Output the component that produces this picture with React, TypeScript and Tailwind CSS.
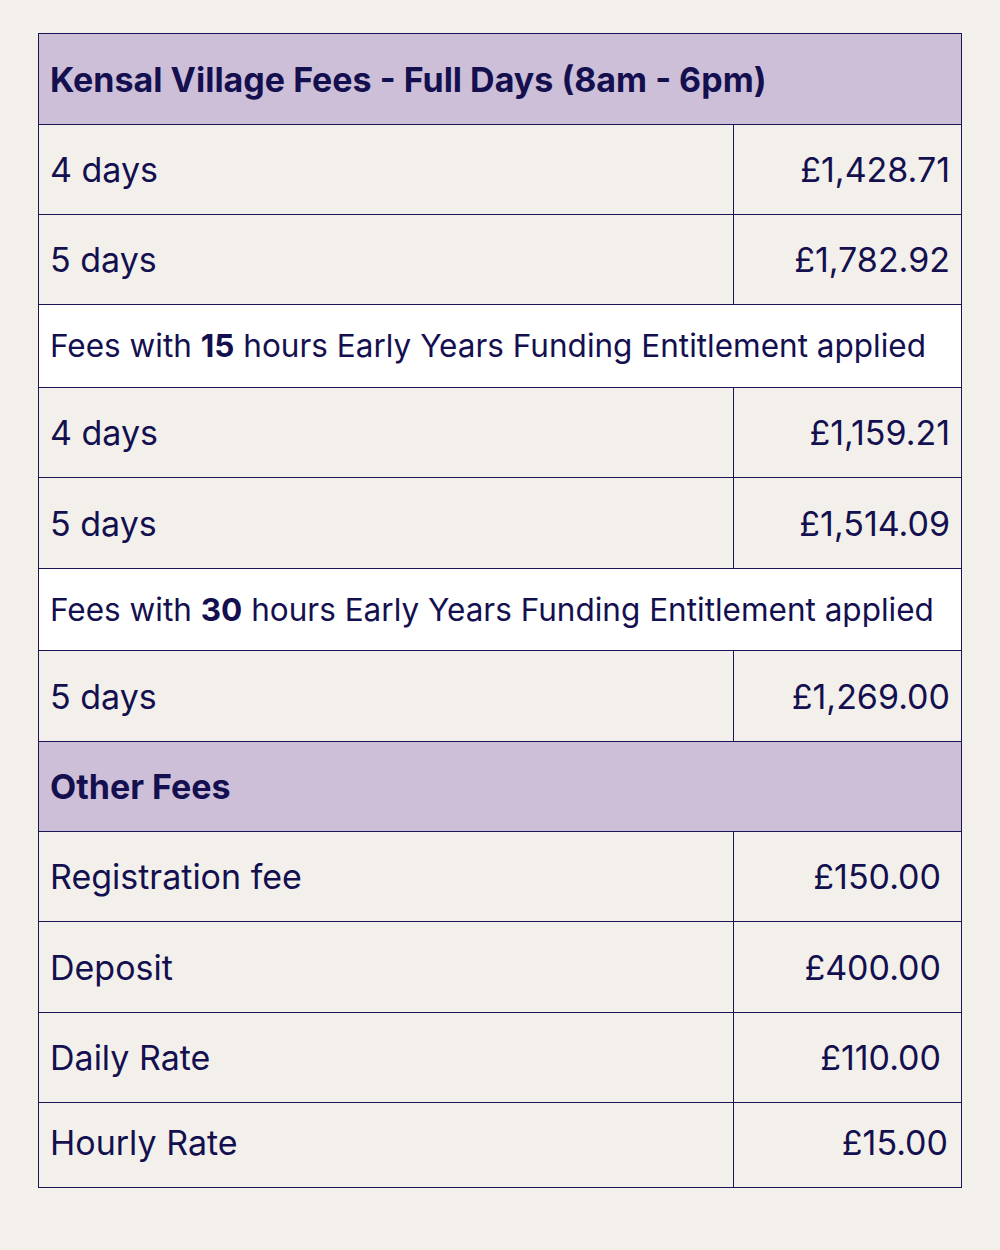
import React from 'react';

type Row =
    | { kind: 'head'; label: string; h: string }
    | { kind: 'note'; hours: string; h: string }
    | { kind: 'fee'; label: string; amount: string; h: string; pr: string };

const rows: Row[] = [
    { kind: 'head', label: 'Kensal Village Fees - Full Days (8am - 6pm)', h: 'h-[91px]' },
    { kind: 'fee', label: '4 days', amount: '£1,428.71', h: 'h-[90px]', pr: 'pr-[11px]' },
    { kind: 'fee', label: '5 days', amount: '£1,782.92', h: 'h-[90px]', pr: 'pr-[11px]' },
    { kind: 'note', hours: '15', h: 'h-[83px]' },
    { kind: 'fee', label: '4 days', amount: '£1,159.21', h: 'h-[90px]', pr: 'pr-[11px]' },
    { kind: 'fee', label: '5 days', amount: '£1,514.09', h: 'h-[91px]', pr: 'pr-[11px]' },
    { kind: 'note', hours: '30', h: 'h-[82px]' },
    { kind: 'fee', label: '5 days', amount: '£1,269.00', h: 'h-[91px]', pr: 'pr-[11px]' },
    { kind: 'head', label: 'Other Fees', h: 'h-[90px]' },
    { kind: 'fee', label: 'Registration fee', amount: '£150.00', h: 'h-[90px]', pr: 'pr-[20px]' },
    { kind: 'fee', label: 'Deposit', amount: '£400.00', h: 'h-[91px]', pr: 'pr-[20px]' },
    { kind: 'fee', label: 'Daily Rate', amount: '£110.00', h: 'h-[90px]', pr: 'pr-[20px]' },
    { kind: 'fee', label: 'Hourly Rate', amount: '£15.00', h: 'h-[85px] pb-[5px]', pr: 'pr-[13px]' },
];

const App = () => {
    return (
        <div className="min-h-[1250px] w-[1000px] bg-[#f3f0ec] pt-[33px] pl-[38px] font-['Inter',sans-serif] text-[#14104f]">
            <div className="w-[924px] border-l border-t border-[#1b1653]">
                {rows.map((row, i) => {
                    if (row.kind === 'head') {
                        return (
                            <div key={i} className={`${row.h} flex items-center border-r border-b border-[#1b1653] bg-[#cdbfd8] pl-[11px] text-[34px] font-bold`}>
                                {row.label}
                            </div>
                        );
                    }
                    if (row.kind === 'note') {
                        return (
                            <div key={i} className={`${row.h} flex items-center border-r border-b border-[#1b1653] bg-white pl-[11px] text-[31.5px]`}>
                                <span>
                                    Fees with <b className="font-bold">{row.hours}</b> hours Early Years Funding Entitlement applied
                                </span>
                            </div>
                        );
                    }
                    return (
                        <div key={i} className="flex">
                            <div className={`${row.h} w-[695px] flex items-center border-r border-b border-[#1b1653] pl-[11px] text-[34px]`}>
                                {row.label}
                            </div>
                            <div className={`${row.h} flex-1 flex items-center justify-end border-r border-b border-[#1b1653] ${row.pr} text-[34px]`}>
                                {row.amount}
                            </div>
                        </div>
                    );
                })}
            </div>
        </div>
    );
};

export default App;
